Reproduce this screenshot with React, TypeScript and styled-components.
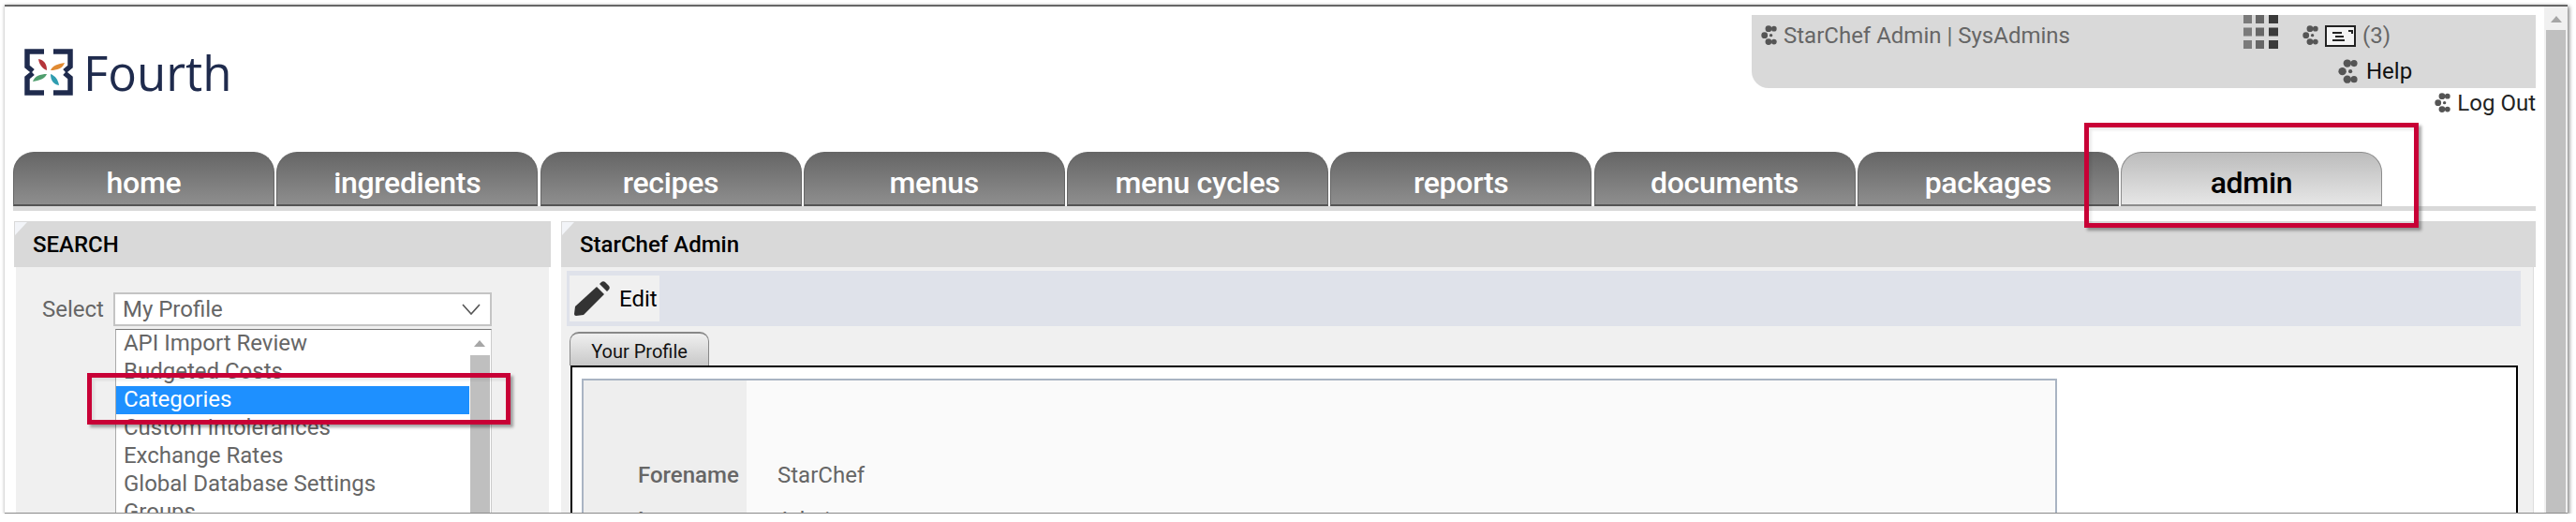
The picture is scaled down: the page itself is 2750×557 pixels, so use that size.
import styled, {createGlobalStyle} from "styled-components";

const GlobalStyle = createGlobalStyle`
  html, body {
    margin: 0;
    background: #fff;
    overflow: hidden;
    font-family: Roboto, "Liberation Sans", sans-serif;
  }
  * {
    box-sizing: border-box;
  }
`

const Frame = styled.div`
  position: relative;
  display: flex;
  width: 2736px;
  height: 543px;
  margin: 5px 0 0 5px;
  border-top: 2px solid #666;
  border-bottom: 1px solid #8a8a8a;
  overflow: hidden;
  background: #fff;
  box-shadow: 2px 2px 4px rgba(0, 0, 0, .45), -1px 0 3px rgba(0, 0, 0, .15);
`
const Page = styled.div`
  flex: 1;
  min-width: 0;
  padding: 0 9px;
`
const Scrollbar = styled.div`
  display: flex;
  flex-direction: column;
  align-items: center;
  width: 25px;
  padding-top: 10px;
  background: #f0f0f0;
`
const ArrowUp = styled.div`
  width: 0;
  height: 0;
  border-left: 6px solid transparent;
  border-right: 6px solid transparent;
  border-bottom: 7px solid #a6a6a6;
`
const Thumb = styled.div`
  flex: 1;
  width: 21px;
  margin-top: 8px;
  background: #c0c0c0;
`

const Header = styled.header`
  display: flex;
  justify-content: space-between;
  height: 155px;
`
const LogoLink = styled.a`
  display: flex;
  align-items: flex-start;
  gap: 11px;
  height: 60px;
  margin: 45px 0 0 12px;
`
const LogoText = styled.span`
  font-family: "Open Sans", sans-serif;
  font-size: 51px;
  line-height: 50px;
  font-weight: 500;
  color: #1f2b4d;
`
const UserColumn = styled.div`
  display: flex;
  flex-direction: column;
  align-items: flex-end;
  padding-top: 9px;
`
const UserPanel = styled.div`
  display: flex;
  width: 837px;
  height: 78px;
  padding-left: 10px;
  background: #d9d9d9;
  border-bottom-left-radius: 18px;
`
const UserName = styled.div`
  display: flex;
  align-items: center;
  gap: 7px;
  width: 515px;
  height: 44px;
  font-size: 24px;
  color: #666;
`
const Tools = styled.div`
  display: flex;
  flex-direction: column;
  margin-left: 26px;
`
const MessageRow = styled.div`
  display: flex;
  align-items: center;
  gap: 7px;
  height: 44px;
  font-size: 24px;
  color: #666;
`
const HelpRow = styled.div`
  display: flex;
  align-items: center;
  gap: 9px;
  margin: 1px 0 0 38px;
  font-size: 24px;
  line-height: 30px;
  color: #111;
`
const LogOut = styled.div`
  display: flex;
  align-items: center;
  gap: 7px;
  margin-top: 1px;
  font-size: 24px;
  line-height: 30px;
  color: #222;
`

const TabBar = styled.nav`
  display: flex;
  gap: 2.25px;
  height: 63px;
  border-bottom: 5px solid #d9d9d9;
`
const Tab = styled.a<{ $active?: boolean }>`
  display: flex;
  align-items: center;
  justify-content: center;
  width: 279px;
  height: 58px;
  padding-top: 8px;
  border: 1px solid ${props => props.$active ? "#8c8c8c" : "#666"};
  border-bottom: 2px solid ${props => props.$active ? "#8c8c8c" : "#555"};
  border-radius: 22px 22px 0 0;
  background: ${props => props.$active
    ? "linear-gradient(#bcbcbc, #e6e6e6)"
    : "linear-gradient(#666, #8e8e8e)"};
  font-size: 32px;
  font-weight: 500;
  letter-spacing: -.3px;
  color: ${props => props.$active ? "#000" : "#fff"};
`

const Columns = styled.div`
  display: flex;
  gap: 11px;
  margin: 11px 0 0 1px;
  height: 400px;
`
const Panel = styled.section<{ $wide?: boolean }>`
  display: flex;
  flex-direction: column;
  flex: ${props => props.$wide ? "1" : "0 0 573px"};
  min-width: 0;
`
const PanelTitle = styled.h2`
  position: relative;
  display: flex;
  flex: 0 0 49px;
  align-items: center;
  margin: 0;
  padding-left: 20px;
  background: #d9d9d9;
  font-size: 24px;
  font-weight: 500;
  color: #000;
  &:before {
    content: "";
    position: absolute;
    top: 1px;
    left: 1px;
    border-top: 14px solid #f2f4f8;
    border-right: 13px solid transparent;
  }
`
const PanelBody = styled.div`
  flex: 1;
  min-height: 0;
  margin: 0 2px;
  background: #f0f0f0;
`
const SearchBody = styled(PanelBody)`
  display: flex;
  align-items: flex-start;
  gap: 10px;
  padding: 27px 0 0 28px;
`
const FieldLabel = styled.label`
  font-size: 24px;
  line-height: 36px;
  color: #666;
`
const SelectWrap = styled.div`
  position: relative;
  width: 404px;
`
const SelectBox = styled.div`
  display: flex;
  align-items: center;
  justify-content: space-between;
  height: 36px;
  padding: 0 10px 0 8px;
  border: 2px solid #c4c4c4;
  background: #fff;
  font-size: 24px;
  color: #666;
`
const Dropdown = styled.div`
  position: absolute;
  top: 39px;
  left: 2px;
  display: flex;
  width: 402px;
  height: 300px;
  border-top: 1px solid #777;
  border-left: 1px solid #aaa;
  border-right: 1px solid #ccc;
  background: #fff;
`
const Options = styled.ul`
  flex: 1;
  margin: 0;
  padding: 0;
  list-style: none;
`
const Option = styled.li<{ $selected?: boolean }>`
  height: 30px;
  padding-left: 8px;
  font-size: 24px;
  line-height: 28px;
  color: ${props => props.$selected ? "#fff" : "#666"};
  background: ${props => props.$selected ? "#1e90ff" : "transparent"};
`
const ListScroll = styled.div`
  display: flex;
  flex-direction: column;
  align-items: center;
  flex: 0 0 23px;
  padding-top: 11px;
  background: #fff;
`
const ListThumb = styled.div`
  flex: 1;
  width: 21px;
  margin-top: 9px;
  background: #bfbfbf;
`

const MainBody = styled(PanelBody)`
  margin: 0 2px 0 0;
  padding: 4px 13px 0 6px;
  border-right: 1px solid #ddd;
`
const Toolbar = styled.div`
  height: 59px;
  padding: 5px 3px;
  background: #dfe2ea;
`
const EditButton = styled.button`
  display: flex;
  align-items: center;
  gap: 10px;
  width: 96px;
  height: 49px;
  padding: 0 0 0 5px;
  border: 0;
  background: #f0f0f0;
  font: 24px Roboto, sans-serif;
  color: #000;
`
const SubTab = styled.div`
  display: flex;
  align-items: center;
  justify-content: center;
  width: 149px;
  height: 36px;
  margin: 6px 0 0 3px;
  padding-top: 3px;
  border: 1px solid #888;
  border-top-width: 2px;
  border-bottom: 0;
  border-radius: 10px 10px 0 0;
  background: linear-gradient(#f0f0f0, #c8c8c8);
  font-size: 20px;
  color: #111;
`
const TabContent = styled.div`
  height: 300px;
  margin: 0 3px 0 4px;
  padding: 12px 10px;
  border: 2px solid #000;
  background: #fff;
`
const ProfileCard = styled.div`
  display: grid;
  grid-template-columns: 172px 1fr;
  grid-auto-rows: 48px;
  width: 1575px;
  padding: 77px 2px 0;
  border: 2px solid #a9b4c3;
  background: linear-gradient(90deg, #eee 174px, #fafafa 174px);
  font-size: 24px;
  line-height: 48px;
`
const ProfileLabel = styled.div`
  padding-left: 56px;
  font-weight: 500;
  color: #666;
  white-space: nowrap;
`
const ProfileValue = styled.div`
  padding-left: 33px;
  color: #666;
`

const Annotation = styled.div<{ $x: number, $y: number, $w: number, $h: number }>`
  position: absolute;
  left: ${props => `${props.$x}px`};
  top: ${props => `${props.$y}px`};
  width: ${props => `${props.$w}px`};
  height: ${props => `${props.$h}px`};
  border: 5px solid #c80036;
  box-shadow: 3px 3px 3px rgba(0, 0, 0, .35), inset 3px 3px 3px rgba(0, 0, 0, .08);
`

const Dots = ({size = 17}: { size?: number }) => (
  <svg width={size} height={size * 1.25} viewBox="0 0 16 20" fill="#555">
    <circle cx="7.5" cy="3.5" r="3.2"/>
    <circle cx="13" cy="3.5" r="2.7"/>
    <circle cx="3.5" cy="10" r="3.2"/>
    <circle cx="10" cy="10" r="1.6"/>
    <circle cx="7.5" cy="16.5" r="3.2"/>
    <circle cx="13" cy="16.5" r="2.7"/>
  </svg>
)

const Waffle = () => (
  <svg width="37" height="36" viewBox="0 0 37 36">
    {[0, 13.5, 27].map(y => (
      <g key={y}>
        <rect x="0" y={y} width="9" height="9" fill="#7b7b7b"/>
        <rect x="13" y={y} width="9" height="9" fill="#666"/>
        <rect x="27" y={y} width="10" height="9" fill="#3a3a3a"/>
      </g>
    ))}
  </svg>
)

const MessageIcon = () => (
  <svg width="33" height="23" viewBox="0 0 33 23">
    <rect x="1" y="1" width="31" height="21" fill="#f4f4f4" stroke="#222" strokeWidth="2"/>
    <path d="M8 8h10M11 12h9M8 16h13M25 6h4v3" stroke="#222" strokeWidth="2" fill="none"/>
  </svg>
)

const LogoMark = () => (
  <svg width="52" height="50" viewBox="0 0 52 50">
    <g fill="none" stroke="#1f2b4d" strokeWidth="5.5">
      <path d="M21 3H3V19L9 24"/>
      <path d="M31 3H49V19L43 24"/>
      <path d="M21 47H3V31L9 26"/>
      <path d="M31 47H49V31L43 26"/>
    </g>
    <path d="M15 11c6 1 9 5 9 12-5-2-8-6-9-12z" fill="#b5353b"/>
    <path d="M43 15c-2 6-8 8-15 8 2-5 8-7 15-8z" fill="#e08a32"/>
    <path d="M9 35c2-6 8-8 15-8-2 5-8 7-15 8z" fill="#4f9e6d"/>
    <path d="M37 39c-6-1-9-5-9-12 5 2 8 6 9 12z" fill="#2f9db0"/>
  </svg>
)

const Chevron = () => (
  <svg width="20" height="12" viewBox="0 0 20 12" fill="none" stroke="#555" strokeWidth="1.6">
    <path d="M1 1l9 10 9-10"/>
  </svg>
)

const Pencil = () => (
  <svg width="38" height="37" viewBox="0 0 38 37" fill="#333">
    <path d="M1 27L24 6l8 8L10 36l-8 1c-1 0-2-1-2-2z"/>
    <path d="M27 3l2-2c1-1 3-1 4 0l4 4c1 1 1 3 0 4l-2 2z"/>
  </svg>
)

const tabs = ["home", "ingredients", "recipes", "menus", "menu cycles", "reports", "documents", "packages", "admin"]
const options = ["API Import Review", "Budgeted Costs", "Categories", "Custom Intolerances", "Exchange Rates", "Global Database Settings", "Groups"]

const App = () => {
  return (
    <>
      <GlobalStyle/>
      <Frame>
        <Page>
          <Header>
            <LogoLink>
              <LogoMark/>
              <LogoText>Fourth</LogoText>
            </LogoLink>
            <UserColumn>
              <UserPanel>
                <UserName><Dots/>StarChef Admin | SysAdmins</UserName>
                <Waffle/>
                <Tools>
                  <MessageRow><Dots/><MessageIcon/>(3)</MessageRow>
                  <HelpRow><Dots size={21}/>Help</HelpRow>
                </Tools>
              </UserPanel>
              <LogOut><Dots/>Log Out</LogOut>
            </UserColumn>
          </Header>
          <TabBar>
            {tabs.map(tab => <Tab key={tab} $active={tab === "admin"}>{tab}</Tab>)}
          </TabBar>
          <Columns>
            <Panel>
              <PanelTitle>SEARCH</PanelTitle>
              <SearchBody>
                <FieldLabel>Select</FieldLabel>
                <SelectWrap>
                  <SelectBox>My Profile<Chevron/></SelectBox>
                  <Dropdown>
                    <Options>
                      {options.map(option => (
                        <Option key={option} $selected={option === "Categories"}>{option}</Option>
                      ))}
                    </Options>
                    <ListScroll>
                      <ArrowUp/>
                      <ListThumb/>
                    </ListScroll>
                  </Dropdown>
                </SelectWrap>
              </SearchBody>
            </Panel>
            <Panel $wide>
              <PanelTitle>StarChef Admin</PanelTitle>
              <MainBody>
                <Toolbar>
                  <EditButton><Pencil/>Edit</EditButton>
                </Toolbar>
                <SubTab>Your Profile</SubTab>
                <TabContent>
                  <ProfileCard>
                    <ProfileLabel>Forename</ProfileLabel>
                    <ProfileValue>StarChef</ProfileValue>
                    <ProfileLabel>Last name</ProfileLabel>
                    <ProfileValue>Admin</ProfileValue>
                  </ProfileCard>
                </TabContent>
              </MainBody>
            </Panel>
          </Columns>
        </Page>
        <Scrollbar>
          <ArrowUp/>
          <Thumb/>
        </Scrollbar>
        <Annotation $x={2220} $y={124} $w={357} $h={112}/>
        <Annotation $x={88} $y={391} $w={452} $h={55}/>
      </Frame>
    </>
  );
};

export default App;
